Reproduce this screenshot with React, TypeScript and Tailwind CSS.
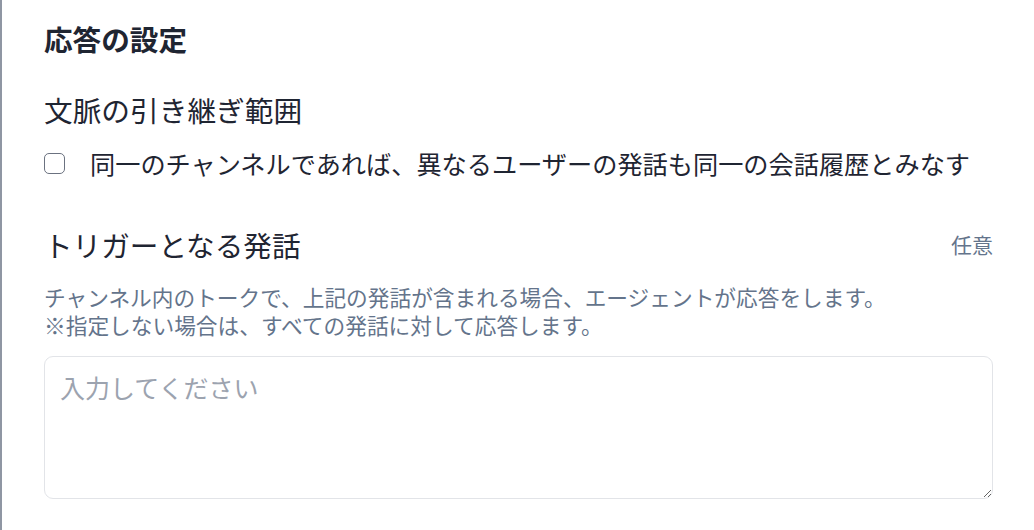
export default function App() {
  return (
    <div
      className="w-[1034px] h-[530px] overflow-hidden bg-white border-l-2 border-[#8f96a3] pl-[42px] pr-[41px] pt-[21px] text-[#1f2532]"
      style={{ fontFamily: '"Noto Sans CJK JP", "Noto Sans", sans-serif' }}
    >
      <h2 className="text-[28.6px] leading-[36px] font-bold">応答の設定</h2>

      <h3 className="mt-[35px] text-[28.7px] leading-[36px]">文脈の引き継ぎ範囲</h3>

      <label className="mt-[17px] flex flex-row items-center h-[36px]">
        <input
          type="checkbox"
          className="appearance-none w-[21px] h-[21px] rounded-[5px] border-[1.5px] border-[#6b7280] bg-white shrink-0"
        />
        <span className="ml-[25px] text-[25.2px] leading-[36px] whitespace-nowrap">
          同一のチャンネルであれば、異なるユーザーの発話も同一の会話履歴とみなす
        </span>
      </label>

      <div className="mt-[46px] flex flex-row items-center justify-between h-[36px]">
        <h3 className="text-[28.6px] leading-[36px]">トリガーとなる発話</h3>
        <span className="text-[21px] text-[#64748b]">任意</span>
      </div>

      <p className="mt-[20px] text-[21.7px] leading-[28px] text-[#64748b] whitespace-nowrap">
        チャンネル内のトークで、上記の発話が含まれる場合、エージェントが応答をします。
        <br />
        ※指定しない場合は、すべての発話に対して応答します。
      </p>

      <textarea
        placeholder="入力してください"
        className="mt-[17px] block w-full h-[143px] rounded-[9px] border border-[#e2e4e8] px-[15px] pt-[12px] text-[25px] leading-[36px] placeholder:text-[#9ca3af] outline-none"
      />
    </div>
  );
}
